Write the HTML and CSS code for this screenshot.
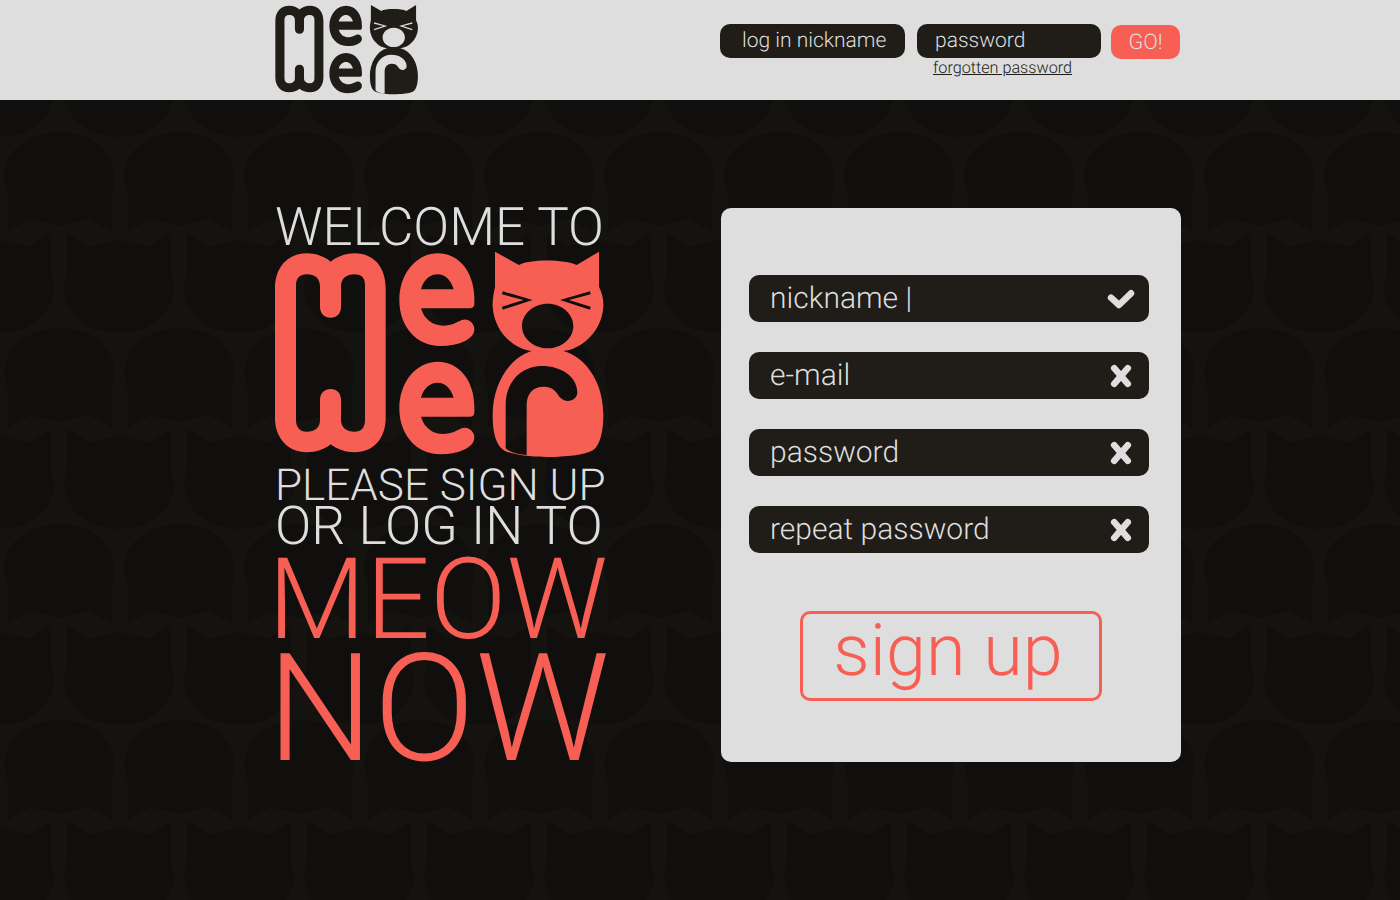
FILE: index.html
```html
<!DOCTYPE html>
<html lang="en">
<head>
<meta charset="utf-8">
<title>Meow - sign up</title>
<link rel="stylesheet" href="styles.css">
</head>
<body>
<svg class="defs" width="0" height="0" aria-hidden="true">
  <defs>
    <symbol id="logo" viewBox="0 0 1050 660">
      <path fill-rule="evenodd" d="M30 130C30 65 70 25 125 25C155 25 180 35 197 50C215 35 240 25 270 25C325 25 362 65 362 130L362 520C362 580 325 622 270 622C240 622 215 612 197 598C180 612 155 622 125 622C70 622 30 580 30 520ZM93 120C93 100 105 88 125 88C150 88 165 100 165 125L165 185C165 205 178 218 197 218C216 218 228 205 228 185L228 125C228 100 245 88 268 88C290 88 300 100 300 120L300 525C300 548 290 560 268 560C245 560 228 548 228 525L228 465C228 445 216 432 197 432C178 432 165 445 165 465L165 525C165 548 150 560 125 560C105 560 93 548 93 525Z"/>
      <path id="logo-e" fill-rule="evenodd" d="M468 190C478 225 505 242 535 242C560 242 575 232 590 225C610 218 628 235 628 252C628 270 615 280 600 288C580 298 555 303 525 303C455 303 403 245 403 165C403 85 455 25 518 25C585 25 628 85 628 160L628 178C628 186 622 190 615 190ZM468 133C475 105 495 88 518 88C540 88 558 105 566 133Z"/>
      <use href="#logo-e" y="325"/>
      <path fill-rule="evenodd" d="M690 20L762 60C790 42 900 42 935 60L1002 20L1002 125C1012 145 1016 165 1015 185C1010 260 950 312 895 318L800 318C745 312 688 260 683 185C682 165 686 145 690 125ZM848 176C806 176 771 206 771 243C771 280 806 310 848 310C890 310 925 280 925 243C925 206 890 176 848 176ZM713 139L803 165L713 194L711 185L776 165L711 148ZM975 139L885 165L975 194L977 185L912 165L977 148Z"/>
      <path fill-rule="evenodd" d="M800 318C730 340 683 420 683 510C683 580 700 610 725 620C760 632 800 636 850 636C900 636 960 630 985 615C1005 600 1015 560 1015 510C1015 420 970 340 895 318C865 310 830 310 800 318ZM722 610L722 480C722 410 770 363 830 363C890 363 935 395 937 440C938 455 925 468 908 468C895 468 885 460 878 448C868 432 855 425 835 425C805 425 785 445 785 480L785 630C760 630 735 622 722 610Z"/>
    </symbol>
    <path id="dome" d="M8 132L8 97C8 92 4 85 4 78C4 48 30 32 60 32C90 32 115 48 115 78C115 85 112 92 112 97L112 132L88 119L60 126L30 120Z"/>
    <path id="cup" d="M67 133L90 146L119 140L148 146L171 133L171 173C171 178 174 182 174 187C174 215 150 233 119 233C88 233 64 215 64 187C64 182 67 178 67 173Z"/>
    <pattern id="cats" class="cats" width="120" height="196" patternUnits="userSpaceOnUse">
      <use href="#dome"/>
      <use href="#cup"/>
      <use href="#cup" x="-120"/>
      <use href="#cup" y="-196"/>
      <use href="#cup" x="-120" y="-196"/>
    </pattern>
    <symbol id="icon-check" viewBox="0 0 30 30"><path d="M5 13.700L13 21L25 9.300"/></symbol>
    <symbol id="icon-cross" viewBox="0 0 30 30"><path d="M8.200 7.200L21.800 22.800M21.800 7.200L8.200 22.800"/></symbol>
  </defs>
</svg>

<header class="topbar">
  <svg class="logo logo-small" viewBox="0 0 1050 660"><use href="#logo"/></svg>
  <form class="login">
    <div class="pill">log in nickname</div>
    <div class="pw-field">
      <div class="pill pill-pw">password</div>
      <a class="forgot" href="#">forgotten password</a>
    </div>
    <button class="go" type="button">GO!</button>
  </form>
</header>

<main class="main">
  <svg class="pattern" aria-hidden="true"><rect width="100%" height="100%" fill="url(#cats)"/></svg>
  <section class="intro">
    <div class="welcome">WELCOME TO</div>
    <svg class="logo logo-large" viewBox="0 0 1050 660"><use href="#logo"/></svg>
    <div class="please">PLEASE SIGN UP</div>
    <div class="orlog">OR LOG IN TO</div>
    <div class="meow">MEOW</div>
    <div class="now">NOW</div>
  </section>
  <form class="card">
    <div class="field"><span>nickname |</span><svg class="icon"><use href="#icon-check"/></svg></div>
    <div class="field"><span>e-mail</span><svg class="icon"><use href="#icon-cross"/></svg></div>
    <div class="field"><span>password</span><svg class="icon"><use href="#icon-cross"/></svg></div>
    <div class="field"><span>repeat password</span><svg class="icon"><use href="#icon-cross"/></svg></div>
    <button class="signup" type="button">sign up</button>
  </form>
</main>
</body>
</html>
```
FILE: styles.css
```css
* { box-sizing: border-box; }
html, body { margin: 0; height: 100%; }
body {
  width: 1400px;
  height: 900px;
  overflow: hidden;
  font-family: Roboto, "Liberation Sans", sans-serif;
  font-weight: 300;
  text-rendering: geometricPrecision;
  background: #100f0d;
}
.defs { position: absolute; }
.logo { display: block; fill: currentColor; }
.cats { fill: #100f0d; }

.topbar {
  height: 100px;
  background: #dedede;
  color: #201d18;
  display: flex;
  align-items: flex-start;
  padding: 2px 0 0 271px;
  width: 100%;
}
.logo-small { width: 152px; height: 96px; flex: none; }
.login {
  display: flex;
  align-items: flex-start;
  margin-left: 297px;
  padding-top: 22px;
  gap: 12px;
}
.pill {
  width: 185px;
  height: 34px;
  background: #201d18;
  color: #dedede;
  border-radius: 10px;
  font-size: 21px;
  line-height: 35px;
  padding-left: 22px;
}
.pill-pw { width: 184px; padding-left: 18px; }
.pw-field { display: flex; flex-direction: column; align-items: flex-start; }
.forgot {
  color: #201d18;
  font-size: 16.200px;
  line-height: 19px;
  margin-left: 16px;
}
.go {
  width: 69px;
  height: 34px;
  margin-top: 1px;
  margin-left: -2px;
  border: 0;
  border-radius: 10px;
  background: #f75f55;
  color: #dedede;
  font: 300 21.500px/35px Roboto, sans-serif;
  text-rendering: geometricPrecision;
  padding: 0;
}

.main {
  position: relative;
  height: 800px;
  background: #14130f;
  display: flex;
  align-items: flex-start;
  padding: 108px 0 0 265px;
}
.pattern { position: absolute; inset: 0; width: 100%; height: 100%; }
.intro, .card { position: relative; }
.intro { width: 456px; color: #dedede; margin-top: -13px; }
.welcome { font-size: 53px; line-height: 64px; padding-left: 10px; white-space: nowrap; }
.logo-large { width: 350px; height: 220px; margin-top: -14px; color: #f75f55; }
.please { font-size: 44px; line-height: 44px; padding-left: 10px; margin-top: -2px; white-space: nowrap; }
.orlog { font-size: 53.600px; line-height: 40px; padding-left: 10px; white-space: nowrap; }
.meow { font-size: 113px; line-height: 106px; color: #f75f55; padding-left: 3px; white-space: nowrap; }
.now { font-size: 150px; line-height: 112px; color: #f75f55; padding-left: 2px; white-space: nowrap; }

.card {
  width: 460px;
  height: 554px;
  background: #dedede;
  border-radius: 10px;
  padding: 67px 32px 0 28px;
  display: flex;
  flex-direction: column;
  gap: 30px;
}
.field {
  height: 47px;
  flex: none;
  background: #201d18;
  color: #dedede;
  border-radius: 10px;
  display: flex;
  align-items: center;
  justify-content: space-between;
  padding: 0 13px 0 21px;
  font-size: 30px;
}
.icon { width: 30px; height: 30px; fill: none; stroke: #dedede; stroke-width: 6.500; stroke-linecap: round; stroke-linejoin: round; }
.signup {
  align-self: center;
  width: 302px;
  height: 90px;
  margin-top: 28px;
  margin-left: 4px;
  background: transparent;
  border: 3px solid #f75f55;
  border-radius: 10px;
  color: #f75f55;
  font: 300 72px/74px Roboto, sans-serif;
  text-rendering: geometricPrecision;
  padding: 0 6px 10px 0;
}
```
